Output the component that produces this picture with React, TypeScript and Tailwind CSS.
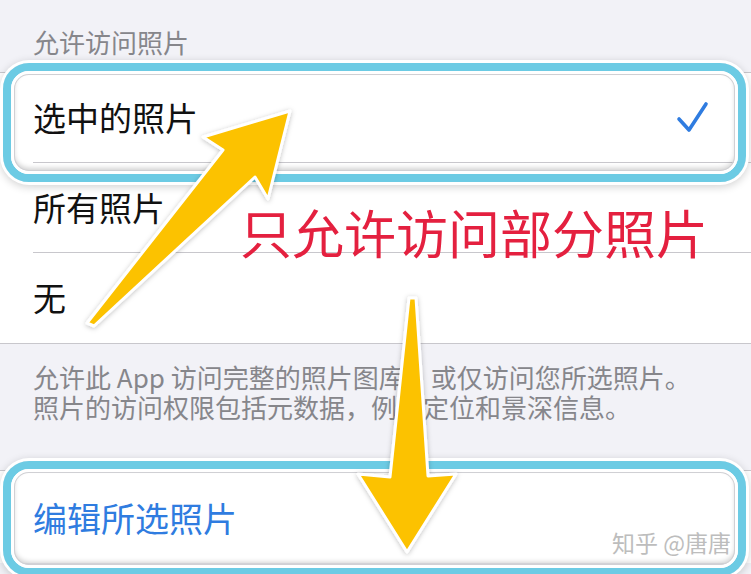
import React from 'react';

const font = { fontFamily: '"Noto Sans CJK SC", "Noto Sans", sans-serif' };

function Row({ children, last }: { children: React.ReactNode; last?: boolean }) {
  return (
    <div className="relative h-[90px] flex items-center pl-[33px] pr-[40px]">
      {children}
      {!last && <div className="absolute left-[33px] right-0 bottom-0 h-px bg-[#c8c7cc]" />}
    </div>
  );
}

function Highlight({ className }: { className: string }) {
  return (
    <div
      className={`absolute pointer-events-none rounded-[26px] border-[8px] border-[#6ccbe4] shadow-[0_0_0_3px_#ffffff,0_2px_8px_3px_rgba(0,0,0,0.18)] ${className}`}
    >
      <div className="w-full h-full rounded-[18px] border-[3px] border-white">
        <div className="w-full h-full rounded-[15px] shadow-[inset_0_0_0_1px_#d0d0d4,inset_0_-3px_5px_rgba(0,0,0,0.18)]" />
      </div>
    </div>
  );
}

export default function App() {
  return (
    <div className="relative w-[751px] h-[574px] overflow-hidden bg-[#f2f2f7]" style={font}>
      {/* header */}
      <div className="h-[72px] pt-[27px] pl-[33px] text-[26px] leading-[30px] text-[#86868b]">允许访问照片</div>

      {/* options */}
      <div className="bg-white border-y border-[#c8c7cc] text-[33px] text-[#111111]">
        <Row>
          <span className="flex-1">选中的照片</span>
          <svg width="34" height="34" viewBox="0 0 34 34" className="mr-[1px]">
            <path d="M3 18 L13 29 L30 3" fill="none" stroke="#2f7ce0" strokeWidth="3.6" strokeLinecap="round" strokeLinejoin="round" />
          </svg>
        </Row>
        <Row>
          <span>所有照片</span>
        </Row>
        <Row last>
          <span>无</span>
        </Row>
      </div>

      {/* footer */}
      <div className="h-[126px] pt-[18px] pl-[33px] text-[26px] leading-[30px] text-[#86868b]">
        <div>允许此 App 访问完整的照片图库，或仅访问您所选照片。</div>
        <div>照片的访问权限包括元数据，例如定位和景深信息。</div>
      </div>

      {/* edit */}
      <div className="bg-white border-t border-[#c8c7cc] text-[34px] text-[#2f7ce0]">
        <div className="h-[92px] flex items-center pl-[33px]">编辑所选照片</div>
      </div>

      {/* annotations */}
      <Highlight className="left-[3px] top-[63px] w-[743px] h-[119px]" />
      <Highlight className="left-[3px] top-[461px] w-[743px] h-[115px]" />

      <div className="absolute left-[240px] top-[202px] text-[52px] leading-[60px] text-[#e4203f] whitespace-nowrap">
        只允许访问部分照片
      </div>

      <svg className="absolute left-0 top-0 pointer-events-none" width="751" height="574" viewBox="0 0 751 574">
        <defs>
          <filter id="sh" x="-20%" y="-20%" width="140%" height="140%">
            <feDropShadow dx="0" dy="1" stdDeviation="2.5" floodColor="#000" floodOpacity="0.25" />
          </filter>
        </defs>
        <polygon
          points="87,323 223,150 203,137 290,111 268,199 255,177 94,326"
          fill="#fcc201"
          stroke="#ffffff"
          strokeWidth="3"
          strokeLinejoin="round"
          filter="url(#sh)"
        />
        <polygon
          points="409,298 416,298 428,476 456,474 407,552 358,474 390,477"
          fill="#fcc201"
          stroke="#ffffff"
          strokeWidth="3"
          strokeLinejoin="round"
          filter="url(#sh)"
        />
      </svg>

      <div className="absolute left-[612px] top-[528px] text-[23px] leading-[28px] text-[#bdbdbd] [text-shadow:0_0_2px_#ffffff] whitespace-nowrap">
        知乎 @唐唐
      </div>
    </div>
  );
}
